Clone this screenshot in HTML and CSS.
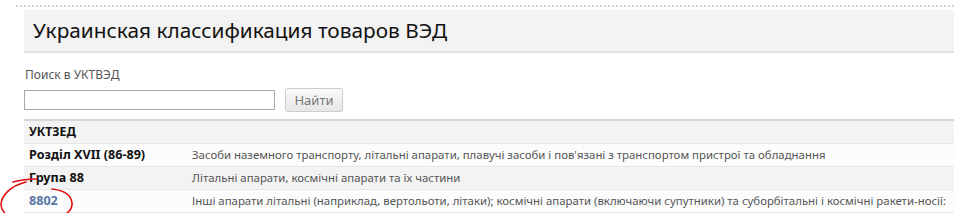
FILE: index.html
```html
<!DOCTYPE html>
<html lang="ru">
<head>
  <meta charset="UTF-8" />
  <title>Украинская классификация товаров ВЭД</title>
  <link rel="stylesheet" href="styles.css">
</head>
<body>
  <div class="top-line"></div>

  <div class="page">
    <header class="title-bar">
      <h1>Украинская классификация товаров ВЭД</h1>
    </header>

    <!-- Search -->
    <form class="search">
      <label for="q">Поиск в УКТВЭД</label>
      <div class="search-row">
        <input type="text" id="q">
        <button type="button">Найти</button>
      </div>
    </form>

    <!-- Classification path -->
    <table class="tree">
      <colgroup>
        <col class="col-code">
        <col>
      </colgroup>
      <tr class="head">
        <th colspan="2">УКТЗЕД</th>
      </tr>
      <tr>
        <td class="code">Розділ XVII (86-89)</td>
        <td>Засоби наземного транспорту, літальні апарати, плавучі засоби і пов'язані з транспортом пристрої та обладнання</td>
      </tr>
      <tr class="alt">
        <td class="code">Група 88</td>
        <td>Літальні апарати, космічні апарати та їх частини</td>
      </tr>
      <tr>
        <td class="code"><a href="#">8802</a></td>
        <td>Інші апарати літальні (наприклад, вертольоти, літаки); космічні апарати (включаючи супутники) та суборбітальні і космічні ракети-носії:</td>
      </tr>
    </table>
  </div>

  <svg class="scribble" width="80" height="53" viewBox="0 0 80 53">
    <path d="M13 12 C20 10 28 9 37 9" />
    <path d="M26 12 C10 16 1 26 1 35 C2 47 20 53 38 52 C58 51 73 43 72 33 C71 24 62 20 52 19" />
  </svg>
</body>
</html>
```

FILE: styles.css
```css
* {
  box-sizing: border-box;
}

body {
  margin: 0;
  background: #fff;
  font-family: "Noto Sans", sans-serif;
  font-size: 12px;
  color: #555;
  position: relative;
  overflow: hidden;
}

.top-line {
  margin: 5px 0 0 16px;
  border-top: 2px dotted #d8d2c8;
}

.page {
  padding: 3px 0 0 24px;
}

/* Title */
.title-bar {
  background: #f3f3f3;
  border-bottom: 2px solid #e1e1e1;
  height: 43px;
  padding: 0 9px;
}

.title-bar h1 {
  margin: 0;
  font-family: "Noto Sans", sans-serif;
  font-weight: normal;
  font-size: 20.8px;
  line-height: 41px;
  color: #111;
}

/* Search */
.search {
  padding-top: 13px;
}

.search label {
  display: block;
  font-size: 12px;
  color: #555;
  margin-left: 1px;
}

.search-row {
  display: flex;
  align-items: center;
  gap: 10px;
  margin-top: 5px;
}

.search input {
  width: 251px;
  height: 20px;
  border: 1px solid #aaa;
  padding: 0 3px;
  margin: 0;
}

.search button {
  width: 58px;
  height: 24px;
  border: 1px solid #ccc;
  border-radius: 3px;
  background: linear-gradient(#fbfbfb, #e6e6e6);
  color: #777;
  font-family: "Noto Sans", sans-serif;
  font-size: 13px;
  padding: 0;
}

/* Tree table */
.tree {
  width: 100%;
  table-layout: fixed;
  border-collapse: collapse;
  margin-top: 7px;
  border-top: 2px solid #d6d6d6;
  font-size: 11.4px;
}

.tree .col-code {
  width: 163px;
}

.tree th,
.tree td {
  text-align: left;
  padding: 0 5px;
  height: 23px;
  border-bottom: 1px solid #e8e8e8;
  white-space: nowrap;
}

.tree th {
  color: #111;
  font-size: 12.2px;
  font-weight: bold;
}

.tree .head,
.tree .alt {
  background: #f3f3f3;
}

.tree tr {
  background: #fcfcfc;
}

.tree .code {
  color: #111;
  font-size: 12.6px;
  font-weight: bold;
}

.tree a {
  color: #5a77a6;
  text-decoration: none;
}

/* red hand-drawn mark over the link */
.scribble {
  position: absolute;
  left: 0;
  top: 170px;
  fill: none;
  stroke: #e01010;
  stroke-width: 1.6;
  stroke-linecap: round;
}
```
